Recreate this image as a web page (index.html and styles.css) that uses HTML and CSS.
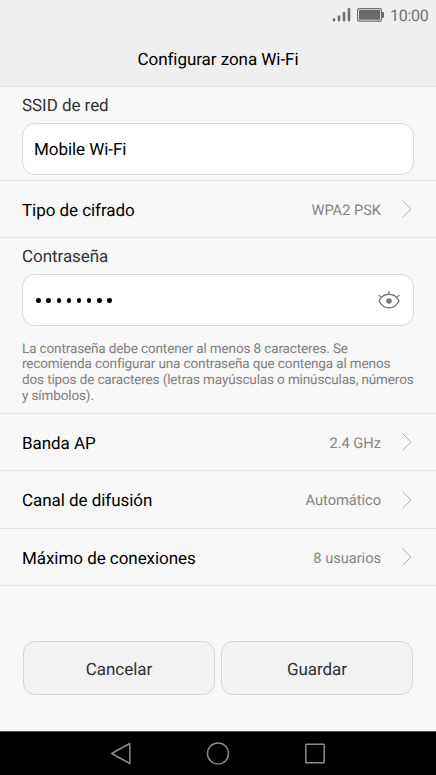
FILE: index.html
```html
<!DOCTYPE html>
<html lang="es">
<head>
<meta charset="utf-8">
<title>Configurar zona Wi-Fi</title>
<link rel="stylesheet" href="styles.css">
</head>
<body>
<header class="header">
  <div class="status">
    <svg class="signal" width="20" height="16" viewBox="0 0 20 16"><path d="M2 12.500v.8M7 9.500v3.800M12 6v7.300M17 2v11.300" /></svg>
    <svg class="battery" width="27" height="14" viewBox="0 0 27 14"><rect class="case" x=".6" y=".6" width="23.800" height="12.600" rx="1.500"/><rect x="2" y="2" width="21" height="9.800"/><path d="M25 4h1q1 0 1 1v4q0 1-1 1h-1z"/></svg>
    <span class="clock">10:00</span>
  </div>
  <h1 class="title">Configurar zona Wi-Fi</h1>
</header>
<main class="form">
  <section class="group ssid">
    <div class="label">SSID de red</div>
    <div class="field">Mobile Wi-Fi</div>
  </section>
  <div class="row"><span class="name">Tipo de cifrado</span><span class="value">WPA2 PSK</span><svg class="chevron" width="12" height="20" viewBox="0 0 12 20"><path d="M1.500 1.500 10 10 1.500 18.500"/></svg></div>
  <section class="group password">
    <div class="label">Contraseña</div>
    <div class="field secret">
      <span class="dots"><i></i><i></i><i></i><i></i><i></i><i></i><i></i><i></i></span>
      <svg class="eye" width="24" height="20" viewBox="0 0 24 20"><path d="M2 11C6.500 1.900 17.500 1.900 22 11C17.500 20.100 6.500 20.100 2 11ZM12 4V1.500M4.500 7.300 2 5.500M19.500 7.300 22 5.500"/><circle cx="12" cy="11" r="2.800"/></svg>
    </div>
    <p class="hint">La contraseña debe contener al menos 8 caracteres. Se<br>recomienda configurar una contraseña que contenga al menos<br>dos tipos de caracteres (letras mayúsculas o minúsculas, números<br>y símbolos).</p>
  </section>
  <div class="row"><span class="name">Banda AP</span><span class="value">2.4 GHz</span><svg class="chevron" width="12" height="20" viewBox="0 0 12 20"><path d="M1.500 1.500 10 10 1.500 18.500"/></svg></div>
  <div class="row tall"><span class="name">Canal de difusión</span><span class="value">Automático</span><svg class="chevron" width="12" height="20" viewBox="0 0 12 20"><path d="M1.500 1.500 10 10 1.500 18.500"/></svg></div>
  <div class="row"><span class="name">Máximo de conexiones</span><span class="value">8 usuarios</span><svg class="chevron" width="12" height="20" viewBox="0 0 12 20"><path d="M1.500 1.500 10 10 1.500 18.500"/></svg></div>
  <div class="actions"><button class="button">Cancelar</button><button class="button">Guardar</button></div>
</main>
<nav class="navbar">
  <svg width="24" height="24" viewBox="0 0 24 24"><path d="M20.800 1.500v20L2.700 11.500Z"/></svg>
  <svg width="24" height="24" viewBox="0 0 24 24"><circle cx="12" cy="11.500" r="10.500"/></svg>
  <svg width="24" height="24" viewBox="0 0 24 24"><rect x="2.800" y="2.300" width="18.400" height="18.400" rx=".5"/></svg>
</nav>
</body>
</html>
```
FILE: styles.css
```css
* { box-sizing: border-box; }
body {
  margin: 0;
  height: 775px;
  display: flex;
  flex-direction: column;
  overflow: hidden;
  background: #f7f7f7;
  color: #000;
  font: 17px/20px Roboto, sans-serif;
  letter-spacing: -0.05px;
  text-rendering: geometricPrecision;
}
.header { height: 87px; background: #efefef; border-bottom: 1px solid #e2e2e2; }
.status { display: flex; align-items: center; height: 30px; padding: 0 8px 0 0; justify-content: flex-end; color: #707070; }
.signal { margin-right: 5px; fill: none; stroke: #707070; stroke-width: 2.6; stroke-linecap: round; }
.battery { fill: #6b6b6b; margin-right: 6px; }
.case { fill: none; stroke: #707070; stroke-width: 1.2; }
.clock { width: 38px; font-size: 16px; letter-spacing: -0.3px; padding-top: 1px; }
.title { margin: 20px 0 0; font-size: 17px; font-weight: 400; line-height: 20px; text-align: center; }
.form { flex: 1; }
.group { padding: 9px 22px 0; border-bottom: 1px solid #e4e4e4; }
.ssid { height: 94px; }
.password { height: 176px; }
.label { color: #333; line-height: 20px; margin-bottom: 7px; }
.field {
  display: flex;
  align-items: center;
  justify-content: space-between;
  height: 52px;
  padding: 2px 12px 0 11px;
  background: #fff;
  border: 1px solid #d9d9d9;
  border-radius: 13px;
}
.secret { padding-top: 0; }
.dots { display: flex; gap: 5.500px; padding: 1px 0 0 2.400px; }
.dots i { width: 4.600px; height: 4.600px; border-radius: 50%; background: #000; }
.eye { fill: none; stroke: #7a7a7a; stroke-width: 1.4; stroke-linecap: round; }
.eye circle { fill: #7a7a7a; stroke: none; }
.hint { margin: 15.500px -10px 0 0; color: #808080; font-size: 13.500px; line-height: 15.800px; letter-spacing: -0.125px; white-space: nowrap; }
.row { display: flex; align-items: center; height: 57px; padding: 0 23px 0 22px; border-bottom: 1px solid #e4e4e4; }
.tall { height: 58px; }
.name { padding-top: 3px; }
.value { margin-left: auto; padding-top: 1px; color: #858585; font-size: 14.700px; }
.tall .name { padding-top: 2px; }
.tall .value { padding-top: 0; }
.chevron { margin-left: 20px; fill: none; stroke: #b5b5b5; stroke-width: 1; }
.actions { display: grid; grid-template-columns: 1fr 1fr; gap: 6px; padding: 55px 23px 0; }
.button { height: 54px; padding: 3px 0 0; border: 1px solid #d7d7d7; border-radius: 12px; background: #f2f2f2; color: #303030; font: 17px Roboto, sans-serif; letter-spacing: inherit; text-rendering: inherit; }
.navbar { display: flex; align-items: center; justify-content: center; gap: 73px; height: 44px; background: #000; border-top: 1px solid #555; }
.navbar svg { fill: none; stroke: #8a8a8a; stroke-width: 1.5; stroke-linejoin: round; }
```
